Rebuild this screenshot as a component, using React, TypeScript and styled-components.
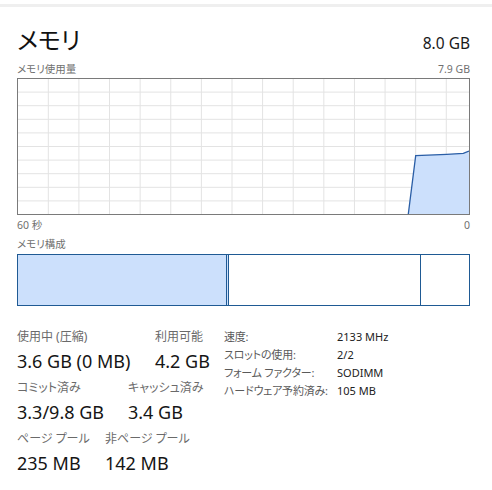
import styled, { createGlobalStyle } from "styled-components";

const FONT = `"Noto Sans", "Noto Sans CJK JP", sans-serif`;
const LINE_BLUE = "#2a5ea6";
const FILL_BLUE = "#cce0fc";

const GlobalStyle = createGlobalStyle`
  body {
    margin: 0;
    background: #ffffff;
    font-family: ${FONT};
    font-feature-settings: "palt";
  }
  * {
    box-sizing: border-box;
  }
`;

// graph inner area (inside the 1px border)
const GRAPH_W = 451;
const GRAPH_H = 135;
const vLines = Array.from({ length: 14 }, (_, i) => 30.3 + i * 30.615);
const hLines = Array.from({ length: 9 }, (_, i) => 13.6 * (i + 1) - 0.5);
const usage = [
  [390.3, GRAPH_H],
  [397.7, 76.7],
  [428.7, 75.3],
  [445.3, 74.3],
  [GRAPH_W, 72],
];

const segments = [
  { width: 210, fill: FILL_BLUE, first: true },
  { width: 2, fill: FILL_BLUE },
  { width: 192, fill: "#ffffff" },
  { width: 49, fill: "#ffffff" },
];

const statRows = [
  [
    { label: "使用中 (圧縮)", value: "3.6 GB (0 MB)", width: 138 },
    { label: "利用可能", value: "4.2 GB" },
  ],
  [
    { label: "コミット済み", value: "3.3/9.8 GB", width: 111 },
    { label: "キャッシュ済み", value: "3.4 GB" },
  ],
  [
    { label: "ページ プール", value: "235 MB", width: 88 },
    { label: "非ページ プール", value: "142 MB" },
  ],
];

const info = [
  ["速度:", "2133 MHz"],
  ["スロットの使用:", "2/2"],
  ["フォーム ファクター:", "SODIMM"],
  ["ハードウェア予約済み:", "105 MB"],
];

export default function App() {
  const points = usage.map(([x, y]) => `${x},${y}`).join(" ");

  return (
    <Page>
      <GlobalStyle />
      <TopRule />
      <Panel>
        <Header>
          <Title>メモリ</Title>
          <Capacity>8.0 GB</Capacity>
        </Header>

        <LabelRow>
          <SmallLabel>メモリ使用量</SmallLabel>
          <SmallLabel>7.9 GB</SmallLabel>
        </LabelRow>
        <GraphBox>
          <svg width={GRAPH_W} height={GRAPH_H} viewBox={`0 0 ${GRAPH_W} ${GRAPH_H}`}>
            {hLines.map((y) => (
              <line key={`h${y}`} x1={0} x2={GRAPH_W} y1={y} y2={y} stroke="#e3e3e3" strokeWidth={1} />
            ))}
            {vLines.map((x) => (
              <line key={`v${x}`} x1={x} x2={x} y1={0} y2={GRAPH_H} stroke="#e3e3e3" strokeWidth={1} />
            ))}
            <polygon points={`${points} ${GRAPH_W},${GRAPH_H}`} fill={FILL_BLUE} />
            <polyline points={points} fill="none" stroke={LINE_BLUE} strokeWidth={1.3} />
          </svg>
        </GraphBox>
        <AxisRow>
          <SmallLabel>60 秒</SmallLabel>
          <SmallLabel>0</SmallLabel>
        </AxisRow>

        <SectionLabel>メモリ構成</SectionLabel>
        <CompositionBar>
          {segments.map((s, i) => (
            <Segment key={i} $width={s.width} $fill={s.fill} $first={!!s.first} />
          ))}
        </CompositionBar>

        <Stats>
          <StatRows>
            {statRows.map((row, i) => (
              <StatRow key={i}>
                {row.map((s) => (
                  <Stat key={s.label} $width={s.width}>
                    <StatLabel>{s.label}</StatLabel>
                    <StatValue>{s.value}</StatValue>
                  </Stat>
                ))}
              </StatRow>
            ))}
          </StatRows>
          <InfoTable>
            {info.map(([k, v]) => (
              <InfoLine key={k}>
                <InfoLabel>{k}</InfoLabel>
                <InfoValue>{v}</InfoValue>
              </InfoLine>
            ))}
          </InfoTable>
        </Stats>
      </Panel>
    </Page>
  );
}

const Page = styled.div`
  width: 492px;
  height: 490px;
  background: #ffffff;
  overflow: hidden;
`;

const TopRule = styled.div`
  margin-top: 4px;
  height: 3px;
  background: #efefef;
`;

const Panel = styled.div`
  padding: 0 22px 0 17px;
`;

const Header = styled.div`
  display: flex;
  justify-content: space-between;
  align-items: baseline;
  margin-top: 18px;
  height: 30px;
`;

const Title = styled.div`
  font-size: 24px;
  line-height: 30px;
  color: #111111;
`;

const Capacity = styled.div`
  font-size: 15.5px;
  line-height: 30px;
  color: #1a1a1a;
`;

const LabelRow = styled.div`
  display: flex;
  justify-content: space-between;
  margin-top: 7px;
  height: 14px;
`;

const SmallLabel = styled.span`
  font-size: 10.5px;
  line-height: 14px;
  color: #707070;
`;

const GraphBox = styled.div`
  margin-top: 2px;
  width: 453px;
  height: 137px;
  border: 1px solid #7a7a7a;

  svg {
    display: block;
  }
`;

const AxisRow = styled(LabelRow)`
  margin-top: 3px;
`;

const SectionLabel = styled.div`
  margin-top: 5px;
  font-size: 10.5px;
  line-height: 14px;
  color: #707070;
`;

const CompositionBar = styled.div`
  display: flex;
  margin-top: 3px;
  height: 52px;
`;

const Segment = styled.div<{ $width: number; $fill: string; $first: boolean }>`
  flex: 0 0 ${(p) => p.$width}px;
  background: ${(p) => p.$fill};
  border: 1px solid #1f5a94;
  border-left-width: ${(p) => (p.$first ? 1 : 0)}px;
`;

const Stats = styled.div`
  display: grid;
  grid-template-columns: 207px 1fr;
  align-items: start;
  margin-top: 23px;
`;

const StatRows = styled.div`
  display: flex;
  flex-direction: column;
  gap: 7px;
`;

const StatRow = styled.div`
  display: flex;
`;

const Stat = styled.div<{ $width?: number }>`
  flex: 0 0 ${(p) => (p.$width ? `${p.$width}px` : "auto")};
  display: flex;
  flex-direction: column;
  white-space: nowrap;
`;

const StatLabel = styled.div`
  font-size: 12px;
  line-height: 16px;
  color: #6a6a6a;
`;

const StatValue = styled.div`
  margin-top: 4px;
  font-size: 18px;
  line-height: 24px;
  color: #151515;
`;

const InfoTable = styled.div`
  display: grid;
  grid-template-columns: 113px auto;
  grid-auto-rows: 18px;
  align-content: start;
  margin-top: -1px;
`;

const InfoLine = styled.div`
  display: contents;
`;

const InfoLabel = styled.div`
  font-size: 11px;
  line-height: 18px;
  letter-spacing: -0.2px;
  color: #5a5a5a;
  white-space: nowrap;
`;

const InfoValue = styled.div`
  font-size: 11px;
  line-height: 18px;
  color: #222222;
  white-space: nowrap;
`;
